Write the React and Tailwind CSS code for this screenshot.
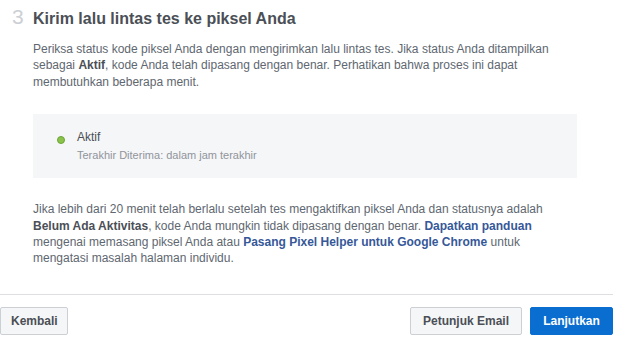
import React from 'react';

function StatusBox() {
  return (
    <div className="mt-[24px] flex h-[64px] bg-[#f5f6f7] px-[24px] pt-[15px]">
      <span className="mt-[7px] h-[8px] w-[8px] shrink-0 rounded-full border border-[#6ba539] bg-[#8bc34a]" />
      <div className="ml-[12px] leading-[16px]">
        <div className="text-[12px] text-[#4b4f56]">Aktif</div>
        <div className="mt-[2px] text-[11px] text-[#90949c]">Terakhir Diterima: dalam jam terakhir</div>
      </div>
    </div>
  );
}

export default function App() {
  const btn = 'h-[28px] rounded-[2px] border text-[12px] font-bold px-[10px]';

  return (
    <div className="w-[620px] h-[344px] bg-white font-['Liberation_Sans',Arial,sans-serif] text-[#606770]">
      <div className="w-[613px]">
        <div className="flex items-baseline pt-[5px] pl-[12px]">
          <span className="w-[21px] text-[21px] leading-[24px] text-[#ccd0d5]">3</span>
          <h1 className="text-[16px] font-bold leading-[24px] text-[#4b4f56]">
            Kirim lalu lintas tes ke piksel Anda
          </h1>
        </div>

        <div className="pl-[33px] pr-[36px]">
          <p className="mt-[10px] text-[12px] leading-[16.4px]">
            Periksa status kode piksel Anda dengan mengirimkan lalu lintas tes. Jika status Anda ditampilkan
            sebagai <b className="text-[#4b4f56]">Aktif</b>, kode Anda telah dipasang dengan benar. Perhatikan bahwa proses ini dapat
            membutuhkan beberapa menit.
          </p>

          <StatusBox />

          <p className="mt-[23px] text-[12px] leading-[16.4px]">
            Jika lebih dari 20 menit telah berlalu setelah tes mengaktifkan piksel Anda dan statusnya adalah{' '}
            <b className="text-[#4b4f56]">Belum Ada Aktivitas</b>, kode Anda mungkin tidak dipasang dengan benar.{' '}
            <a className="font-bold text-[#365899]">Dapatkan panduan</a> mengenai memasang piksel Anda atau{' '}
            <a className="font-bold text-[#365899]">Pasang Pixel Helper untuk Google Chrome</a> untuk
            mengatasi masalah halaman individu.
          </p>
        </div>

        <div className="mt-[27px] border-t border-[#dddfe2] pt-[12px] flex items-center">
          <button className={`${btn} w-[68px] border-[#ccd0d5] bg-[#f5f6f7] text-[#4b4f56]`}>Kembali</button>
          <div className="ml-auto flex gap-[8px]">
            <button className={`${btn} w-[112px] border-[#ccd0d5] bg-[#f5f6f7] text-[#4b4f56]`}>Petunjuk Email</button>
            <button className={`${btn} w-[83px] border-[#0a6ed1] bg-[#0a6ed1] text-white`}>Lanjutkan</button>
          </div>
        </div>
      </div>
    </div>
  );
}
